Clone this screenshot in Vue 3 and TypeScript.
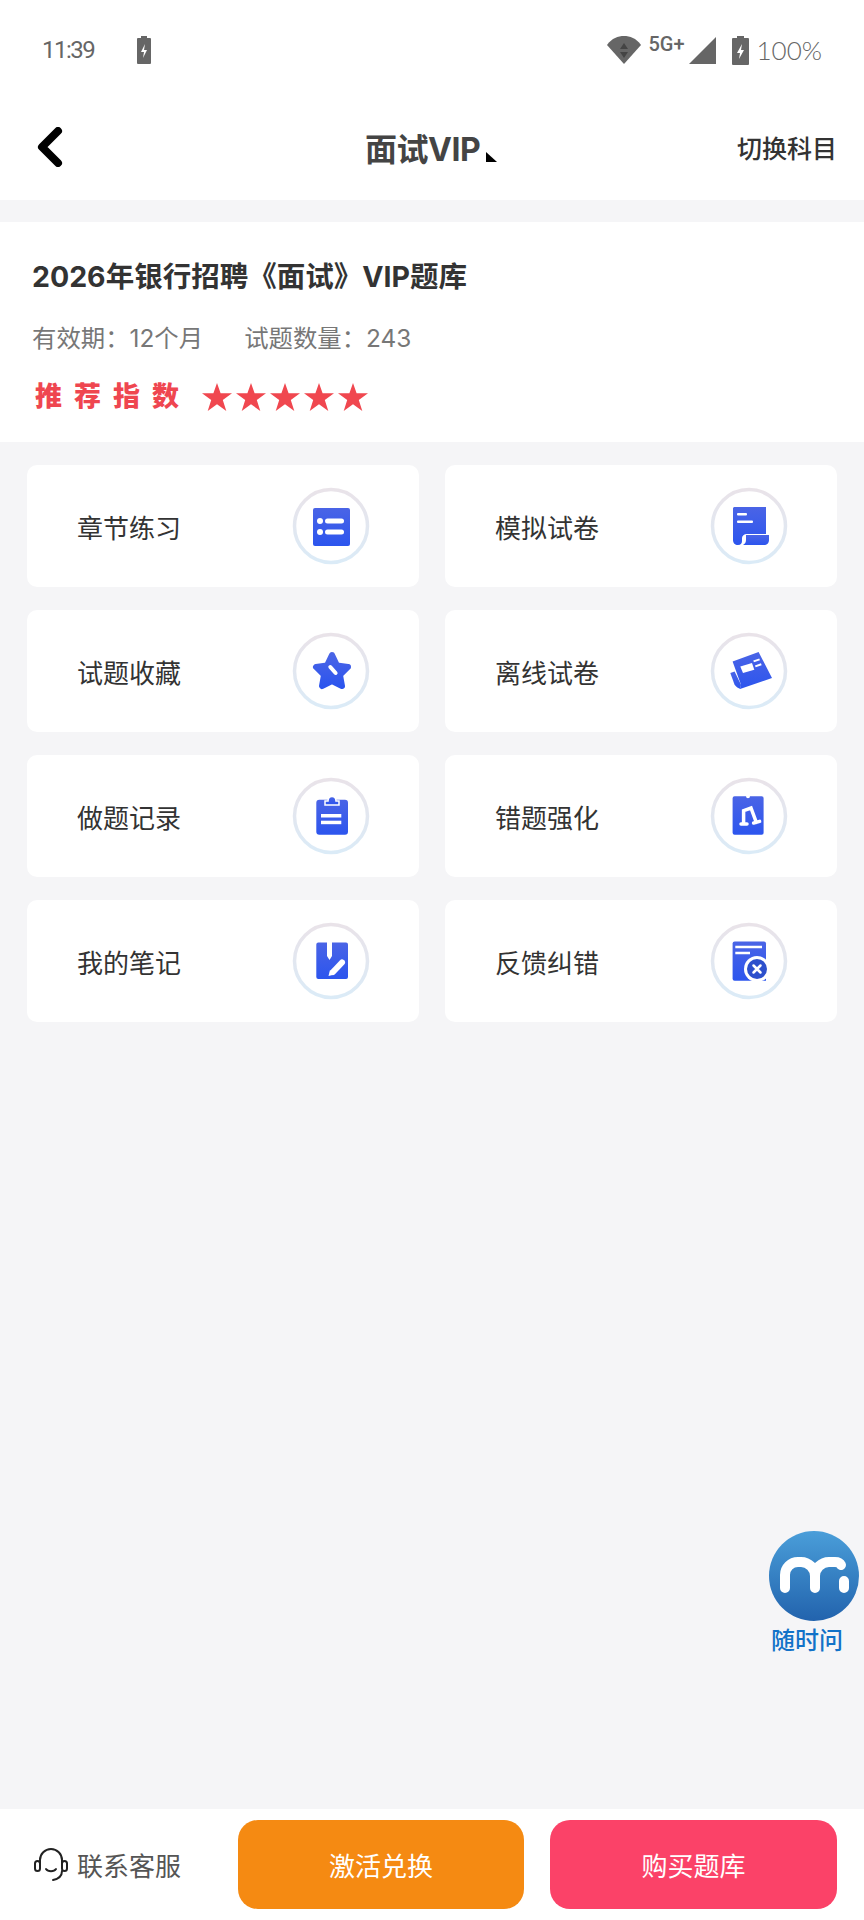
<template>
  <div class="page">
    <div class="status">
      <span class="time">11:39</span>
      <svg class="bolt-batt" width="14" height="28" viewBox="0 0 14 28">
        <path d="M4 2V0h6v2h3a1 1 0 0 1 1 1v24a1 1 0 0 1-1 1H1a1 1 0 0 1-1-1V3a1 1 0 0 1 1-1z" fill="#666" />
        <path d="M8 8l-4 8h3l-1 6 4-8H7z" fill="#fff" />
      </svg>
      <span class="spacer"></span>
      <svg width="34" height="28" viewBox="0 0 34 28">
        <path d="M0 9C5 2 11 0 17 0s12 2 17 9L17 28z" fill="#666" />
        <path d="M17 7l-4 6h8zM17 22l4-6h-8z" fill="#444" />
      </svg>
      <span class="net">5G+</span>
      <svg class="signal" width="27" height="27" viewBox="0 0 27 27"><path d="M27 0v27H0z" fill="#666" /></svg>
      <svg class="batt" width="17" height="29" viewBox="0 0 17 29">
        <path d="M5 2V0h7v2h4a1 1 0 0 1 1 1v25a1 1 0 0 1-1 1H1a1 1 0 0 1-1-1V3a1 1 0 0 1 1-1z" fill="#666" />
        <path d="M10 8l-5 9h3l-1 6 5-9H9z" fill="#fff" />
      </svg>
      <span class="percent">100%</span>
    </div>

    <div class="nav">
      <svg class="back" width="26" height="40" viewBox="0 0 26 40">
        <path d="M21 4L5 20l16 16" fill="none" stroke="#000" stroke-width="8" stroke-linecap="round" stroke-linejoin="round" />
      </svg>
      <div class="nav-title">
        面试VIP
        <svg width="11" height="10" viewBox="0 0 11 10"><path d="M0 0l11 10H0z" fill="#000" /></svg>
      </div>
      <div class="nav-right">切换科目</div>
    </div>

    <section class="info">
      <h1>2026年银行招聘《面试》VIP题库</h1>
      <div class="meta">
        <span>有效期：12个月</span>
        <span>试题数量：243</span>
      </div>
      <div class="rate">
        <span class="rate-label">推荐指数</span>
        <span class="stars">
          <svg v-for="n in 5" :key="n" width="30" height="28" viewBox="0 0 30 28">
            <path d="M15 0l3.6 10.2H30l-9.2 6.7L24.300 28 15 21.200 5.700 28l3.500-11.100L0 10.200h11.400z" fill="#f0474f" />
          </svg>
        </span>
      </div>
    </section>

    <main class="grid">
      <div v-for="(item, i) in items" :key="item.name" class="tile">
        <span class="tile-name">{{ item.name }}</span>
        <svg class="tile-icon" width="78" height="78" viewBox="-1 -1 78 78">
          <defs>
            <linearGradient :id="'ring' + i" x1="0" y1="0" x2="0" y2="1">
              <stop offset="0" stop-color="#e9e3e9" />
              <stop offset="1" stop-color="#dbebf7" />
            </linearGradient>
            <linearGradient :id="'blue' + i" x1="0" y1="0" x2="0" y2="1">
              <stop offset="0" stop-color="#4a64e6" />
              <stop offset="1" stop-color="#2c55ee" />
            </linearGradient>
          </defs>
          <circle cx="38" cy="38" r="36.500" fill="#fff" :stroke="`url(#ring${i})`" stroke-width="3.500" />
          <g v-if="item.icon === 'list'">
            <rect x="20" y="20" width="37" height="38" rx="2" :fill="`url(#blue${i})`" />
            <circle cx="27" cy="33" r="3" fill="#fff" />
            <circle cx="27" cy="44" r="3" fill="#fff" />
            <rect x="32" y="30.500" width="19" height="5" rx="2.500" fill="#fff" />
            <rect x="32" y="41.500" width="19" height="5" rx="2.500" fill="#fff" />
          </g>
          <g v-else-if="item.icon === 'paper'">
            <path d="M23 19h32v27H36c-3 0-5 2-5 4v3c0 2-1 4-4 4-3 0-5-2-5-5V20z" :fill="`url(#blue${i})`" />
            <path d="M35 47h23v5c0 3-2 5-5 5H32c2-1 3-3 3-5z" :fill="`url(#blue${i})`" />
            <rect x="26" y="25" width="10" height="2.500" rx="1" fill="#fff" />
            <rect x="26" y="32.500" width="16" height="2.500" rx="1" fill="#fff" />
          </g>
          <g v-else-if="item.icon === 'star'">
            <polygon points="39,22 44,32.500 55,34 47,42 49,53 39,48 29,53 31,42 23,34 34,32.500" :fill="`url(#blue${i})`" :stroke="`url(#blue${i})`" stroke-width="6" stroke-linejoin="round" />
            <path d="M37.300 34l5.300 6" stroke="#fff" stroke-width="4" stroke-linecap="round" />
          </g>
          <g v-else-if="item.icon === 'news'">
            <path d="M21.600 28.400L47.600 19 61 45 29 56c1-3 1-5 0-7z" :fill="`url(#blue${i})`" />
            <path d="M19.300 40l4.300-1.600L30 51.700 29.300 56c-2-1-4-2-5.700-4.300z" :fill="`url(#blue${i})`" />
            <path d="M29.300 33.400L41 30l2.300 6.700L32 40z" fill="#fff" />
            <path d="M42.600 28.400l6-2M44.300 33.400l6-2.100" stroke="#fff" stroke-width="2" />
          </g>
          <g v-else-if="item.icon === 'clip'">
            <rect x="23.300" y="21.700" width="31.700" height="35" rx="3" :fill="`url(#blue${i})`" />
            <path d="M32 23h3c0-3 2-4.600 4-4.600s4 1.600 4 4.600h3v4H32z" :fill="`url(#blue${i})`" stroke="#fff" stroke-width="1.500" />
            <rect x="28" y="36" width="20.300" height="3.500" fill="#fff" />
            <rect x="28" y="42.700" width="20.300" height="3.500" fill="#fff" />
          </g>
          <g v-else-if="item.icon === 'ticket'">
            <path d="M23.600 18.300H35a2 2 0 0 0 4 0h11.600a2 2 0 0 1 2 2v34.400a2 2 0 0 1-2 2h-27a2 2 0 0 1-2-2V20.300a2 2 0 0 1 2-2z" :fill="`url(#blue${i})`" />
            <path d="M32.600 46V32.700L40 30l5.300 14.400M30 46h6M42.600 45l6-1.600" fill="none" stroke="#fff" stroke-width="3.500" stroke-linecap="round" />
          </g>
          <g v-else-if="item.icon === 'note'">
            <path d="M25.300 19.400H34V33l2.500 4L39 33V19.400h14a2 2 0 0 1 2 2V54a2 2 0 0 1-2 2H25.300a2 2 0 0 1-2-2V21.400a2 2 0 0 1 2-2z" :fill="`url(#blue${i})`" />
            <path d="M35.500 53l6-1.500-4.500-4.500z" fill="#fff" />
            <path d="M40 49l9-9.500" stroke="#fff" stroke-width="6" stroke-linecap="round" />
          </g>
          <g v-else>
            <path d="M23.600 18.400H53a2 2 0 0 1 2 2v37.300H23.600a2 2 0 0 1-2-2V20.400a2 2 0 0 1 2-2z" :fill="`url(#blue${i})`" />
            <path d="M24.300 24H51M24.300 30H39" stroke="#fff" stroke-width="2.500" />
            <circle cx="46" cy="46" r="13" fill="#fff" />
            <circle cx="46" cy="46" r="10" fill="#2d50cc" />
            <path d="M42.500 42.500l7 7M49.500 42.500l-7 7" stroke="#fff" stroke-width="2.500" stroke-linecap="round" />
          </g>
        </svg>
      </div>
    </main>

    <footer class="bar">
      <div class="service">
        <svg width="36" height="34" viewBox="0 0 36 34" fill="none" stroke="#222" stroke-width="2" stroke-linecap="round">
          <path d="M7 15v-3a11 11 0 0 1 22 0v3" />
          <rect x="2" y="13" width="5" height="10" rx="2.500" />
          <rect x="29" y="13" width="5" height="10" rx="2.500" />
          <path d="M13 21c2 3 8 3 10 0" />
          <path d="M29 23c0 5-4 8-9 9" />
        </svg>
        <span>联系客服</span>
      </div>
      <button type="button" class="btn activate">激活兑换</button>
      <button type="button" class="btn buy">购买题库</button>
    </footer>

    <div class="ask">
      <svg width="90" height="90" viewBox="0 0 90 90">
        <defs>
          <linearGradient id="askBg" x1="0" y1="0" x2="0" y2="1">
            <stop offset="0" stop-color="#4a9ed9" />
            <stop offset="1" stop-color="#2263ad" />
          </linearGradient>
        </defs>
        <circle cx="45" cy="45" r="45" fill="url(#askBg)" />
        <path d="M16 57V44a13 13 0 0 1 13-13h3a14 14 0 0 1 14 14v12M46 45a14 14 0 0 1 14-14h6c3 0 5 1 6 3M75 50v7" fill="none" stroke="#fff" stroke-width="10" stroke-linecap="round" />
      </svg>
      <span>随时问</span>
    </div>
  </div>
</template>

<script setup lang="ts">
const items = [
  { name: '章节练习', icon: 'list' },
  { name: '模拟试卷', icon: 'paper' },
  { name: '试题收藏', icon: 'star' },
  { name: '离线试卷', icon: 'news' },
  { name: '做题记录', icon: 'clip' },
  { name: '错题强化', icon: 'ticket' },
  { name: '我的笔记', icon: 'note' },
  { name: '反馈纠错', icon: 'error' }
]
</script>

<style>
body {
  background: #f5f5f7;
}
</style>

<style scoped>
.page {
  position: relative;
  width: 864px;
  height: 1920px;
  display: flex;
  flex-direction: column;
  background: #f5f5f7;
  font-family: Inter, "Noto Sans CJK SC", sans-serif;
  color: #333;
}

.status {
  height: 100px;
  box-sizing: border-box;
  padding: 0 42px;
  display: flex;
  align-items: center;
  background: #fff;
  color: #666;
  font-family: Lato, sans-serif;
  font-weight: 300;
  font-size: 26px;
}

.time {
  font-family: Roboto, sans-serif;
  font-weight: 400;
  font-size: 24px;
  letter-spacing: -1.5px;
}

.bolt-batt {
  margin-left: 43px;
}

.spacer {
  flex: 1;
}

.net {
  align-self: flex-start;
  margin: 32px 5px 0 7px;
  font-family: Roboto, sans-serif;
  font-weight: 500;
  font-size: 20px;
}

.batt {
  margin-left: 16px;
  margin-right: 7px;
}

.nav {
  height: 100px;
  box-sizing: border-box;
  padding: 0 27px 6px 37px;
  display: grid;
  grid-template-columns: 328px auto 1fr;
  align-items: center;
  background: #fff;
}

.nav-title {
  font-size: 32px;
  font-weight: 700;
  color: #444;
  letter-spacing: -0.5px;
  position: relative;
}

.nav-title svg {
  position: absolute;
  right: -17px;
  bottom: 8px;
}

.nav-right {
  justify-self: end;
  font-size: 25px;
  font-weight: 500;
}

.info {
  margin-top: 22px;
  height: 220px;
  box-sizing: border-box;
  padding: 33px 32px 0;
  background: #fff;
}

.info h1 {
  margin: 0;
  font-size: 28.500px;
  line-height: 44px;
  font-weight: 700;
  color: #333;
}

.meta {
  margin-top: 21px;
  display: flex;
  gap: 41px;
  font-size: 24.400px;
  line-height: 36px;
  color: #777;
}

.rate {
  margin-top: 21px;
  display: flex;
  align-items: center;
}

.rate-label {
  margin-left: 3px;
  font-size: 27px;
  line-height: 40px;
  font-weight: 900;
  letter-spacing: 12px;
  color: #ef4650;
}

.stars {
  margin-left: 11px;
  display: flex;
  gap: 4px;
}

.stars svg {
  display: block;
}

.grid {
  flex: 1;
  padding: 23px 27px 0;
  display: grid;
  grid-template-columns: 392px 392px;
  grid-auto-rows: 122px;
  column-gap: 26px;
  row-gap: 23px;
  align-content: start;
}

.tile {
  display: flex;
  align-items: center;
  justify-content: space-between;
  padding: 0 49px 0 50px;
  background: #fff;
  border-radius: 10px;
}

.tile-name {
  font-size: 26px;
  color: #333;
}

.tile-icon {
  display: block;
}

.bar {
  height: 111px;
  box-sizing: border-box;
  padding: 11px 27px 0 33px;
  display: flex;
  background: #fff;
}

.service {
  width: 205px;
  height: 89px;
  display: flex;
  align-items: center;
  gap: 8px;
  font-size: 26px;
  color: #555;
}

.service svg {
  flex: none;
}

.btn {
  height: 89px;
  border: none;
  border-radius: 20px;
  color: #fff;
  font-family: inherit;
  font-size: 26px;
}

.activate {
  width: 286px;
  background: #f58a12;
}

.buy {
  width: 287px;
  margin-left: 26px;
  background: #fb4268;
}

.ask {
  position: absolute;
  left: 769px;
  top: 1531px;
  width: 90px;
  display: flex;
  flex-direction: column;
  align-items: center;
  font-size: 24px;
  line-height: 36px;
  font-weight: 500;
  color: #1272c8;
}

.ask svg {
  display: block;
}

.ask span {
  margin-top: 2px;
  margin-right: 14px;
  white-space: nowrap;
}
</style>
